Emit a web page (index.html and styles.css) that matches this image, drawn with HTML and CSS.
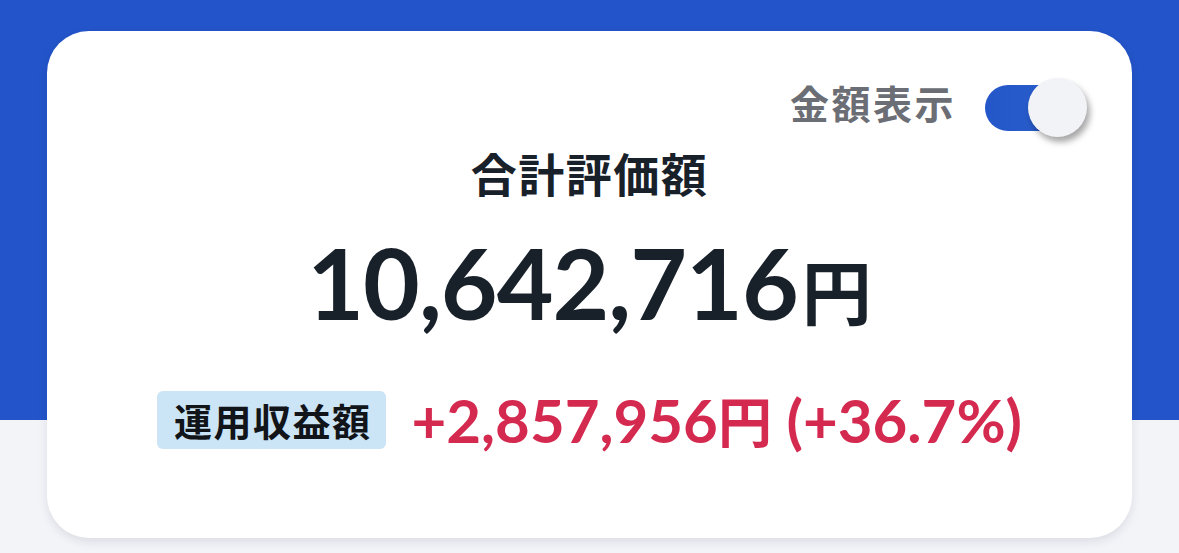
FILE: index.html
```html
<!DOCTYPE html>
<html lang="ja">
<head>
<meta charset="utf-8">
<link rel="stylesheet" href="styles.css">
</head>
<body>
<div class="page">
  <div class="card">
    <div class="top-row">
      <span class="toggle-label">金額表示</span>
      <div class="toggle">
        <div class="toggle-track"></div>
        <div class="toggle-knob"></div>
      </div>
    </div>
    <h1 class="title">合計評価額</h1>
    <div class="total"><span class="total-num">10,642,716</span><span class="total-yen">円</span></div>
    <div class="profit-row">
      <span class="badge">運用収益額</span>
      <span class="profit">+2,857,956<span class="profit-yen">円</span> (+36.7%)</span>
    </div>
  </div>
</div>
</body>
</html>
```

FILE: styles.css
```css
* { box-sizing: border-box; }
html, body {
  margin: 0;
  width: 1179px;
  height: 553px;
  overflow: hidden;
}
body {
  background: linear-gradient(to bottom, #2354c9 0, #2354c9 420px, #f3f4f8 420px, #f3f4f8 100%);
  font-family: Lato, "Noto Sans CJK JP", sans-serif;
}
.page {
  padding: 31px 47px 0 47px;
}
.card {
  width: 1085px;
  height: 507px;
  background: #ffffff;
  border-radius: 42px;
  box-shadow: 0 4px 10px rgba(20, 30, 60, 0.10);
  padding: 47px 45px 0 45px;
  display: flex;
  flex-direction: column;
  align-items: center;
}
.top-row {
  align-self: stretch;
  display: flex;
  justify-content: flex-end;
  align-items: center;
  gap: 29px;
  height: 59px;
}
.toggle-label {
  font-family: "Noto Sans CJK JP", sans-serif;
  font-weight: 700;
  font-size: 39px;
  letter-spacing: 2.5px;
  color: #6b6e74;
  line-height: 1;
  padding-bottom: 11px;
}
.toggle {
  position: relative;
  width: 102px;
  height: 59px;
}
.toggle-track {
  position: absolute;
  left: 0;
  top: 7px;
  width: 92px;
  height: 46px;
  border-radius: 23px;
  background: linear-gradient(to right, #2356c8, #2d60cc);
}
.toggle-knob {
  position: absolute;
  right: 0;
  top: 0;
  width: 59px;
  height: 59px;
  border-radius: 50%;
  background: #f2f3f7;
  box-shadow: 3px 5px 6px rgba(0, 0, 0, 0.35);
}
.title {
  margin: 8px 0 0 0;
  font-family: "Noto Sans CJK JP", sans-serif;
  font-weight: 700;
  font-size: 46px;
  letter-spacing: 1.5px;
  line-height: 1.2;
  color: #18202a;
}
.total {
  margin-top: 33px;
  display: flex;
  align-items: baseline;
  color: #18202a;
  line-height: 1;
}
.total-num {
  font-weight: 700;
  font-size: 98px;
  letter-spacing: -1px;
}
.total-yen {
  font-family: "Noto Sans CJK JP", sans-serif;
  font-weight: 700;
  font-size: 70px;
  margin-left: 4px;
}
.profit-row {
  margin-top: 59px;
  display: flex;
  align-items: center;
  gap: 25px;
}
.badge {
  display: inline-flex;
  align-items: center;
  justify-content: center;
  height: 58px;
  padding: 0 15px 0 17px;
  background: #cbe4f6;
  border-radius: 6px;
  font-family: "Noto Sans CJK JP", sans-serif;
  font-weight: 700;
  font-size: 38px;
  letter-spacing: 1.5px;
  color: #111418;
  line-height: 1;
}
.profit {
  font-weight: 700;
  font-size: 60px;
  color: #d52a50;
  line-height: 1;
}
.profit-yen {
  font-family: "Noto Sans CJK JP", sans-serif;
  font-size: 54px;
}
```
